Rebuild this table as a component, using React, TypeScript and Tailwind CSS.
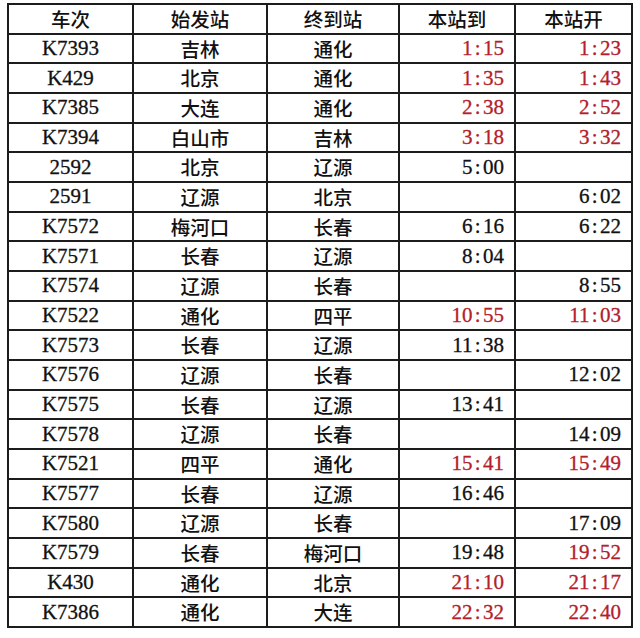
import React from "react";

type Row = [string, string, string, string, string, boolean, boolean];

const rows: Row[] = [
  ["K7393", "吉林", "通化", "1:15", "1:23", true, true],
  ["K429", "北京", "通化", "1:35", "1:43", true, true],
  ["K7385", "大连", "通化", "2:38", "2:52", true, true],
  ["K7394", "白山市", "吉林", "3:18", "3:32", true, true],
  ["2592", "北京", "辽源", "5:00", "", false, false],
  ["2591", "辽源", "北京", "", "6:02", false, false],
  ["K7572", "梅河口", "长春", "6:16", "6:22", false, false],
  ["K7571", "长春", "辽源", "8:04", "", false, false],
  ["K7574", "辽源", "长春", "", "8:55", false, false],
  ["K7522", "通化", "四平", "10:55", "11:03", true, true],
  ["K7573", "长春", "辽源", "11:38", "", false, false],
  ["K7576", "辽源", "长春", "", "12:02", false, false],
  ["K7575", "长春", "辽源", "13:41", "", false, false],
  ["K7578", "辽源", "长春", "", "14:09", false, false],
  ["K7521", "四平", "通化", "15:41", "15:49", true, true],
  ["K7577", "长春", "辽源", "16:46", "", false, false],
  ["K7580", "辽源", "长春", "", "17:09", false, false],
  ["K7579", "长春", "梅河口", "19:48", "19:52", false, true],
  ["K430", "通化", "北京", "21:10", "21:17", true, true],
  ["K7386", "通化", "大连", "22:32", "22:40", true, true],
];

const cjk = "[font-family:'Noto_Sans_CJK_SC',sans-serif] font-medium text-[19.5px] leading-none text-[#111]";
const num = "[font-family:'Liberation_Serif',serif] text-[21px] leading-none [-webkit-text-stroke:0.3px_currentColor]";

function Time({ t }: { t: string }) {
  if (!t) return null;
  const [a, b] = t.split(":");
  return (
    <span>
      {a}
      <span className="inline-block w-[0.5em] text-center">:</span>
      {b}
    </span>
  );
}

export default function App() {
  return (
    <div className="w-[640px] h-[638px] bg-white pt-[3px] pl-[7px]">
      <div className="w-[626px] h-[625px] bg-[#1c1c1c] p-[2px] grid grid-cols-[123px_132px_130px_114px_115px] grid-rows-[repeat(21,minmax(0,1fr))] gap-[2px]">
        {["车次", "始发站", "终到站", "本站到", "本站开"].map((h) => (
          <div key={h} className={`bg-white flex items-center justify-center ${cjk}`}>
            {h}
          </div>
        ))}
        {rows.map((r) => (
          <React.Fragment key={r[0]}>
            <div className={`bg-white flex items-center justify-center text-[#111] ${num}`}>{r[0]}</div>
            <div className={`bg-white flex items-center justify-center ${cjk}`}>{r[1]}</div>
            <div className={`bg-white flex items-center justify-center ${cjk}`}>{r[2]}</div>
            <div
              className={`bg-white flex items-center justify-end pr-[10px] ${num} ${r[5] ? "text-[#b3202a]" : "text-[#111]"}`}
            >
              <Time t={r[3]} />
            </div>
            <div
              className={`bg-white flex items-center justify-end pr-[10px] ${num} ${r[6] ? "text-[#b3202a]" : "text-[#111]"}`}
            >
              <Time t={r[4]} />
            </div>
          </React.Fragment>
        ))}
      </div>
    </div>
  );
}
